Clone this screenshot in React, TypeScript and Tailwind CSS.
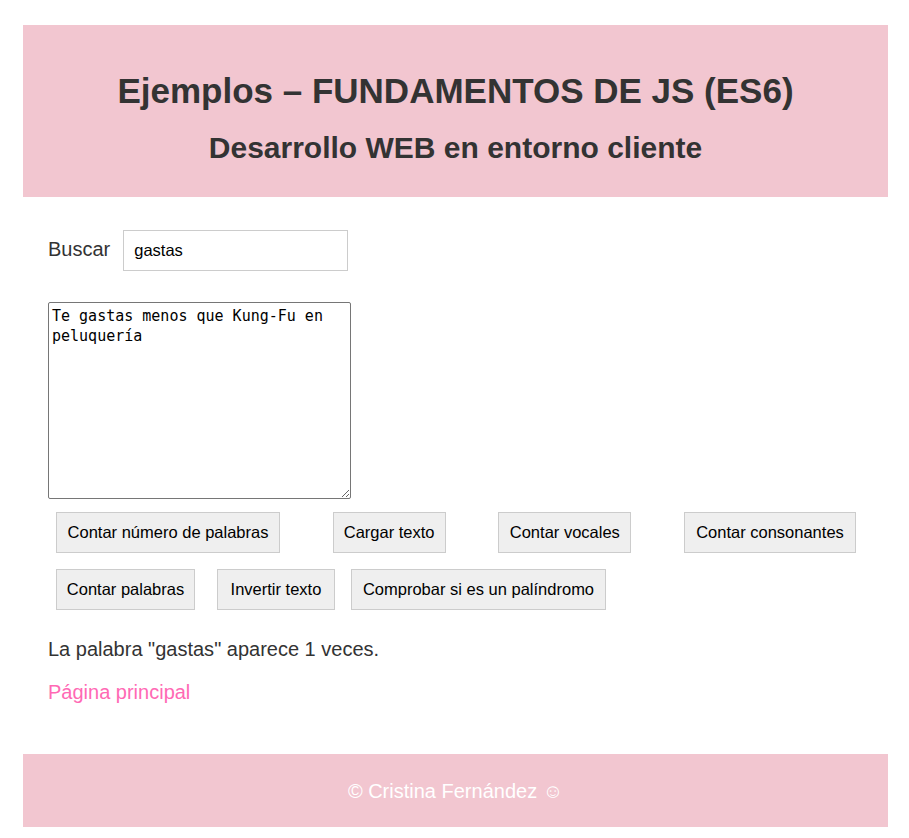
import { useState } from "react";

const ROW_ONE = [
  { label: "Contar número de palabras", w: "w-[224px]" },
  { label: "Cargar texto", w: "w-[113px]" },
  { label: "Contar vocales", w: "w-[133px]" },
  { label: "Contar consonantes", w: "w-[172px]" },
];

export default function App() {
  const [search, setSearch] = useState("gastas");
  const [text, setText] = useState("Te gastas menos que Kung-Fu en peluquería");

  return (
    <div className="min-h-screen bg-white text-[#333] font-['Liberation_Sans',Arial,sans-serif]">
      <div className="ml-[23px] w-[865px] pt-[25px]">
        {/* Header */}
        <header className="bg-[#f2c6d0] h-[172px] pt-[48px] text-center">
          <h1 className="text-[35px] font-bold leading-none">Ejemplos – FUNDAMENTOS DE JS (ES6)</h1>
          <h2 className="text-[30px] font-bold leading-none mt-[25px]">Desarrollo WEB en entorno cliente</h2>
        </header>

        {/* Content */}
        <main className="px-[25px] pt-[33px] pb-[50px]">
          <div className="flex items-center gap-[13px]">
            <label className="text-[20px] -mt-[3px]">Buscar</label>
            <input
              value={search}
              onChange={(e) => setSearch(e.target.value)}
              className="w-[225px] h-[41px] border border-[#ccc] px-[10px] text-[16.5px] text-black outline-none"
            />
          </div>

          <textarea
            value={text}
            onChange={(e) => setText(e.target.value)}
            className="block mt-[31px] w-[303px] h-[197px] border border-[#767676] rounded-[2px] px-[3px] py-[3px] text-[15px] leading-[20px] text-black resize-y font-['DejaVu_Sans_Mono',monospace] outline-none"
          />

          <div className="flex justify-between mt-[13px] pl-[8px] pr-[7px]">
            {ROW_ONE.map((b) => (
              <button key={b.label} className={`h-[41px] ${b.w} bg-[#efefef] border border-[#ccc] text-[16.5px] text-black`}>
                {b.label}
              </button>
            ))}
          </div>
          <div className="flex mt-[16px] ml-[8px]">
            <button className="h-[41px] w-[139px] bg-[#efefef] border border-[#ccc] text-[16.5px] text-black">Contar palabras</button>
            <button className="h-[41px] w-[118px] ml-[22px] bg-[#efefef] border border-[#ccc] text-[16.5px] text-black">Invertir texto</button>
            <button className="h-[41px] w-[255px] ml-[16px] bg-[#efefef] border border-[#ccc] text-[16.5px] text-black">Comprobar si es un palíndromo</button>
          </div>

          <p className="text-[20px] leading-[23px] mt-[28px]">La palabra "{search}" aparece 1 veces.</p>
          <a href="#" className="block text-[20px] leading-[23px] text-[#ff69b4] mt-[20px] w-fit">Página principal</a>
        </main>

        {/* Footer */}
        <footer className="bg-[#f2c6d0] h-[73px] flex items-center justify-center text-white text-[20px]">
          © Cristina Fernández ☺
        </footer>
      </div>
    </div>
  );
}
